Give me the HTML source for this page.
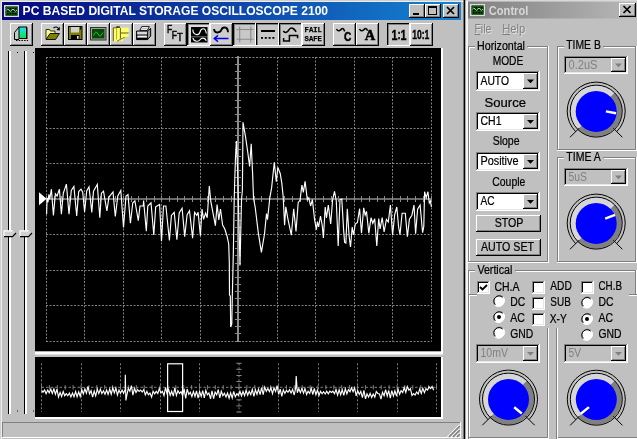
<!DOCTYPE html>
<html><head><meta charset="utf-8"><title>PC BASED DIGITAL STORAGE OSCILLOSCOPE 2100</title>
<style>html,body{margin:0;padding:0;background:#c0c0c0;overflow:hidden}svg{display:block;will-change:transform}text{white-space:pre}</style></head>
<body>
<svg width="637" height="439" viewBox="0 0 637 439" shape-rendering="auto">
<defs>
<linearGradient id="ga" x1="0" x2="1" y1="0" y2="0"><stop offset="0" stop-color="#06067e"/><stop offset="1" stop-color="#1484d2"/></linearGradient>
<linearGradient id="gi" x1="0" x2="1" y1="0" y2="0"><stop offset="0" stop-color="#808080"/><stop offset="1" stop-color="#b8b8b8"/></linearGradient>
<linearGradient id="gc" x1="0" x2="0" y1="0" y2="1"><stop offset="0" stop-color="#20e0ff"/><stop offset="1" stop-color="#10e040"/></linearGradient>
</defs>
<rect x="0" y="0" width="637" height="439" fill="#c0c0c0" />
<rect x="0" y="0" width="466" height="1" fill="#d0d0d0" />
<rect x="0" y="0" width="1" height="439" fill="#d0d0d0" />
<rect x="1" y="1" width="464" height="1" fill="#ececec" />
<rect x="1" y="1" width="1" height="439" fill="#ececec" />
<rect x="463.6" y="0" width="1.9" height="439" fill="#000" />
<rect x="2" y="2" width="459" height="18" fill="url(#ga)" />
<rect x="4" y="5" width="15" height="12" fill="#dcdcdc" />
<rect x="5.5" y="6.5" width="12" height="9" fill="#000" />
<rect x="6.0" y="6.5" width="1" height="9" fill="#095c09" />
<rect x="8.6" y="6.5" width="1" height="9" fill="#095c09" />
<rect x="11.2" y="6.5" width="1" height="9" fill="#095c09" />
<rect x="13.8" y="6.5" width="1" height="9" fill="#095c09" />
<rect x="16.4" y="6.5" width="1" height="9" fill="#095c09" />
<rect x="5.5" y="7.0" width="12" height="1" fill="#095c09" />
<rect x="5.5" y="9.5" width="12" height="1" fill="#095c09" />
<rect x="5.5" y="12.0" width="12" height="1" fill="#095c09" />
<rect x="5.5" y="14.5" width="12" height="1" fill="#095c09" />
<path d="M6.5,10.2 q1.3,-2.4 2.6,0 t2.6,0 t2.6,0 t2.6,0" fill="none" stroke="#e8ffe8" stroke-width="0.8"/>
<text x="22.6" y="15.2" font-family="'Liberation Sans', Arial, sans-serif" font-size="13" font-weight="bold" fill="#fff" text-anchor="start" textLength="305.5" lengthAdjust="spacingAndGlyphs" >PC BASED DIGITAL STORAGE OSCILLOSCOPE 2100</text>
<rect x="409" y="4" width="16" height="14" fill="#c0c0c0" />
<rect x="409" y="4" width="15" height="1" fill="#fff" />
<rect x="409" y="4" width="1" height="13" fill="#fff" />
<rect x="409" y="17" width="16" height="1" fill="#000" />
<rect x="424" y="4" width="1" height="14" fill="#000" />
<rect x="410" y="16" width="14" height="1" fill="#808080" />
<rect x="423" y="5" width="1" height="12" fill="#808080" />
<rect x="413" y="13" width="6" height="2" fill="#000" />
<rect x="425" y="4" width="16" height="14" fill="#c0c0c0" />
<rect x="425" y="4" width="15" height="1" fill="#fff" />
<rect x="425" y="4" width="1" height="13" fill="#fff" />
<rect x="425" y="17" width="16" height="1" fill="#000" />
<rect x="440" y="4" width="1" height="14" fill="#000" />
<rect x="426" y="16" width="14" height="1" fill="#808080" />
<rect x="439" y="5" width="1" height="12" fill="#808080" />
<rect x="428" y="6" width="9" height="9" fill="#000" />
<rect x="429" y="8" width="7" height="6" fill="#c0c0c0" />
<rect x="443" y="4" width="16" height="14" fill="#c0c0c0" />
<rect x="443" y="4" width="15" height="1" fill="#fff" />
<rect x="443" y="4" width="1" height="13" fill="#fff" />
<rect x="443" y="17" width="16" height="1" fill="#000" />
<rect x="458" y="4" width="1" height="14" fill="#000" />
<rect x="444" y="16" width="14" height="1" fill="#808080" />
<rect x="457" y="5" width="1" height="12" fill="#808080" />
<path d="M447,7 l7,7 M454,7 l-7,7" stroke="#000" stroke-width="1.7" fill="none"/>
<rect x="10" y="23" width="23" height="23" fill="#cdcdcd" />
<rect x="10" y="23" width="22" height="1" fill="#fff" />
<rect x="10" y="23" width="1" height="22" fill="#fff" />
<rect x="10" y="45" width="23" height="1" fill="#000" />
<rect x="32" y="23" width="1" height="23" fill="#000" />
<rect x="11" y="44" width="21" height="1" fill="#808080" />
<rect x="31" y="24" width="1" height="21" fill="#808080" />
<path d="M19,27 L14.5,32.5 L14.5,39.5 L19,39.5" fill="#c8c8c8" stroke="#000" stroke-width="1"/>
<rect x="26" y="27.5" width="1.5" height="11.5" fill="#000" />
<rect x="19" y="27" width="7.5" height="11.5" fill="url(#gc)" stroke="#000" stroke-width="1"/>
<line x1="16" y1="40.5" x2="28" y2="40.5" stroke="#000" stroke-width="1" stroke-dasharray="1.5 1.2"/>
<rect x="41" y="23" width="23" height="23" fill="#cdcdcd" />
<rect x="41" y="23" width="22" height="1" fill="#fff" />
<rect x="41" y="23" width="1" height="22" fill="#fff" />
<rect x="41" y="45" width="23" height="1" fill="#000" />
<rect x="63" y="23" width="1" height="23" fill="#000" />
<rect x="42" y="44" width="21" height="1" fill="#808080" />
<rect x="62" y="24" width="1" height="21" fill="#808080" />
<path d="M46,39 L46,29.5 L49.5,29.5 L50.5,31 L55,31 L55,33.5" fill="#ffff80" stroke="#000" stroke-width="0.8"/>
<path d="M46,39.5 L50,33.5 L59.5,33.5 L55.5,39.5 Z" fill="#808000" stroke="#000" stroke-width="0.9"/>
<path d="M53.5,28 q3,-2.5 5.5,1" fill="none" stroke="#000" stroke-width="1.1"/>
<path d="M59.8,26.8 L59.8,30.5 L56.4,30 Z" fill="#000"/>
<rect x="64" y="23" width="23" height="23" fill="#cdcdcd" />
<rect x="64" y="23" width="22" height="1" fill="#fff" />
<rect x="64" y="23" width="1" height="22" fill="#fff" />
<rect x="64" y="45" width="23" height="1" fill="#000" />
<rect x="86" y="23" width="1" height="23" fill="#000" />
<rect x="65" y="44" width="21" height="1" fill="#808080" />
<rect x="85" y="24" width="1" height="21" fill="#808080" />
<rect x="68.5" y="26.5" width="13.5" height="13" fill="#808000" stroke="#000" stroke-width="1"/>
<rect x="71" y="27" width="8" height="5.5" fill="#d0d0d0" />
<rect x="71" y="35" width="8.5" height="4.5" fill="#000" />
<rect x="77" y="36" width="1.6" height="2.8" fill="#e0e0e0" />
<rect x="80" y="27.3" width="1.2" height="2.2" fill="#000" />
<rect x="87" y="23" width="23" height="23" fill="#cdcdcd" />
<rect x="87" y="23" width="22" height="1" fill="#fff" />
<rect x="87" y="23" width="1" height="22" fill="#fff" />
<rect x="87" y="45" width="23" height="1" fill="#000" />
<rect x="109" y="23" width="1" height="23" fill="#000" />
<rect x="88" y="44" width="21" height="1" fill="#808080" />
<rect x="108" y="24" width="1" height="21" fill="#808080" />
<rect x="90.5" y="27.5" width="15.5" height="12.5" fill="#a0a0a0" stroke="#303030" stroke-width="1"/>
<rect x="92" y="29" width="12.5" height="9.5" fill="#064806" />
<path d="M93.5,35.5 q2.2,-6 4.5,-1.5 t4.8,-1.5" fill="none" stroke="#30c030" stroke-width="1"/>
<rect x="110" y="23" width="23" height="23" fill="#cdcdcd" />
<rect x="110" y="23" width="22" height="1" fill="#fff" />
<rect x="110" y="23" width="1" height="22" fill="#fff" />
<rect x="110" y="45" width="23" height="1" fill="#000" />
<rect x="132" y="23" width="1" height="23" fill="#000" />
<rect x="111" y="44" width="21" height="1" fill="#808080" />
<rect x="131" y="24" width="1" height="21" fill="#808080" />
<path d="M113.3,27.8 L128.8,27.8 L128.8,36.6 L126,36.6 L122.3,41.2 L113.3,41.2 Z" fill="#ffff70"/>
<path d="M113.3,41 L113.3,27.8 L116,27.8 M120.4,28 L120.4,38.8 M120.8,33 L128.6,33" stroke="#606000" stroke-width="1" fill="none"/>
<path d="M116.6,28 L116.6,39.5" stroke="#b0b030" stroke-width="1" fill="none"/>
<rect x="116.2" y="26.2" width="3.6" height="1.8" fill="#404000" />
<line x1="117.5" y1="41" x2="124.8" y2="37.2" stroke="#303000" stroke-width="1.1" stroke-dasharray="1.2 1"/>
<rect x="133" y="23" width="23" height="23" fill="#cdcdcd" />
<rect x="133" y="23" width="22" height="1" fill="#fff" />
<rect x="133" y="23" width="1" height="22" fill="#fff" />
<rect x="133" y="45" width="23" height="1" fill="#000" />
<rect x="155" y="23" width="1" height="23" fill="#000" />
<rect x="134" y="44" width="21" height="1" fill="#808080" />
<rect x="154" y="24" width="1" height="21" fill="#808080" />
<path d="M139.8,30.4 L141.8,26.6 L149.3,26.6 L147.3,30.4 Z" fill="#fff" stroke="#000" stroke-width="0.9"/>
<line x1="142" y1="28.5" x2="147.5" y2="28.5" stroke="#a0a0a0" stroke-width="0.7" />
<path d="M136.6,31 L147.5,31 L150.6,28.6 L150.6,36.2 L147.5,39.6 L136.6,39.6 Z" fill="#b8b8b8" stroke="#000" stroke-width="1"/>
<path d="M147.5,31 L150.6,28.6 L150.6,36.2 L147.5,39.6 Z" fill="#989898" stroke="#000" stroke-width="0.8"/>
<rect x="136.6" y="34.6" width="11" height="1" fill="#000" />
<rect x="138" y="35.8" width="8.6" height="1.2" fill="#f4f4f4" />
<rect x="136.6" y="37.8" width="11" height="1.8" fill="#000" />
<rect x="137.4" y="32.2" width="9.5" height="1.6" fill="#e0e0e0" />
<rect x="164" y="23" width="23" height="23" fill="#cdcdcd" />
<rect x="164" y="23" width="22" height="1" fill="#fff" />
<rect x="164" y="23" width="1" height="22" fill="#fff" />
<rect x="164" y="45" width="23" height="1" fill="#000" />
<rect x="186" y="23" width="1" height="23" fill="#000" />
<rect x="165" y="44" width="21" height="1" fill="#808080" />
<rect x="185" y="24" width="1" height="21" fill="#808080" />
<text font-family="'Liberation Sans', Arial, sans-serif" font-size="10.5" fill="#000" stroke="#000" stroke-width="0.45"><tspan x="166.9" y="33.3" textLength="5.2" lengthAdjust="spacingAndGlyphs">F</tspan><tspan x="171.7" y="38.5" textLength="5.2" lengthAdjust="spacingAndGlyphs">F</tspan><tspan x="176.9" y="41.3" font-size="10" textLength="5.8" lengthAdjust="spacingAndGlyphs">T</tspan></text>
<rect x="187" y="23" width="23" height="23" fill="#dcdcdc" />
<rect x="187" y="23" width="23" height="1" fill="#000" />
<rect x="187" y="23" width="1" height="23" fill="#000" />
<rect x="188" y="24" width="21" height="1" fill="#808080" />
<rect x="188" y="24" width="1" height="21" fill="#808080" />
<rect x="187" y="45" width="23" height="1" fill="#fff" />
<rect x="209" y="23" width="1" height="23" fill="#fff" />
<rect x="191" y="27" width="16.5" height="15.5" fill="#000" />
<line x1="191" y1="36.8" x2="207.5" y2="36.8" stroke="#909090" stroke-width="0.8" />
<path d="M192.8,29.5 C193,35.5 199,36 200,32 C201,28 205.5,27 206.3,33.5" fill="none" stroke="#fff" stroke-width="1.1"/>
<path d="M192.8,38 C194,42 198.5,42 200,39.8 C201.5,37.6 205,37.2 206.3,40.8" fill="none" stroke="#fff" stroke-width="1.1"/>
<rect x="210" y="23" width="23" height="23" fill="#cdcdcd" />
<rect x="210" y="23" width="22" height="1" fill="#fff" />
<rect x="210" y="23" width="1" height="22" fill="#fff" />
<rect x="210" y="45" width="23" height="1" fill="#000" />
<rect x="232" y="23" width="1" height="23" fill="#000" />
<rect x="211" y="44" width="21" height="1" fill="#808080" />
<rect x="231" y="24" width="1" height="21" fill="#808080" />
<path d="M214,29 q0.5,3.8 3.5,3.5 q3,-0.3 3.8,-2.5 q1,-2.8 3.5,-2.5 q3,0.3 3.2,4.8" fill="none" stroke="#000" stroke-width="1.9"/>
<path d="M228.5,38.5 L214.5,38.5 M218,35.4 L214.2,38.5 L218,41.6" fill="none" stroke="#0000e0" stroke-width="1.4"/>
<rect x="233" y="23" width="23" height="23" fill="#c8c8c8" />
<rect x="233" y="23" width="23" height="1" fill="#000" />
<rect x="233" y="23" width="1" height="23" fill="#000" />
<rect x="234" y="24" width="21" height="1" fill="#808080" />
<rect x="234" y="24" width="1" height="21" fill="#808080" />
<rect x="233" y="45" width="23" height="1" fill="#fff" />
<rect x="255" y="23" width="1" height="23" fill="#fff" />
<path d="M239.7,26.5 V42.5 M250.8,26.5 V42.5 M236.5,29.5 H253.5 M236.5,39.3 H253.5" stroke="#8a8a8a" stroke-width="1.1" fill="none"/>
<rect x="256" y="23" width="23" height="23" fill="#c8c8c8" />
<rect x="256" y="23" width="23" height="1" fill="#000" />
<rect x="256" y="23" width="1" height="23" fill="#000" />
<rect x="257" y="24" width="21" height="1" fill="#808080" />
<rect x="257" y="24" width="1" height="21" fill="#808080" />
<rect x="256" y="45" width="23" height="1" fill="#fff" />
<rect x="278" y="23" width="1" height="23" fill="#fff" />
<rect x="261" y="30" width="14" height="2" fill="#000" />
<rect x="261.0" y="37" width="2" height="1.8" fill="#000" />
<rect x="264.8" y="37" width="2" height="1.8" fill="#000" />
<rect x="268.6" y="37" width="2" height="1.8" fill="#000" />
<rect x="272.4" y="37" width="2" height="1.8" fill="#000" />
<rect x="279" y="23" width="23" height="23" fill="#c8c8c8" />
<rect x="279" y="23" width="23" height="1" fill="#000" />
<rect x="279" y="23" width="1" height="23" fill="#000" />
<rect x="280" y="24" width="21" height="1" fill="#808080" />
<rect x="280" y="24" width="1" height="21" fill="#808080" />
<rect x="279" y="45" width="23" height="1" fill="#fff" />
<rect x="301" y="23" width="1" height="23" fill="#fff" />
<path d="M283.3,31 q1.2,1.9 3,1.3 q1.6,-0.6 2.8,-2.7 q1.6,-2.1 3.5,-1.3 q1.7,0.8 3.6,3.4" fill="none" stroke="#000" stroke-width="1.5"/>
<path d="M283.6,38 V41 H289.4 V35.4 H297.6 V38.2" fill="none" stroke="#000" stroke-width="1.5"/>
<rect x="302" y="23" width="23" height="23" fill="#cdcdcd" />
<rect x="302" y="23" width="22" height="1" fill="#fff" />
<rect x="302" y="23" width="1" height="22" fill="#fff" />
<rect x="302" y="45" width="23" height="1" fill="#000" />
<rect x="324" y="23" width="1" height="23" fill="#000" />
<rect x="303" y="44" width="21" height="1" fill="#808080" />
<rect x="323" y="24" width="1" height="21" fill="#808080" />
<text x="304.6" y="32.3" font-family="'Liberation Mono', monospace" font-size="7.6" font-weight="bold" fill="#000" text-anchor="start" textLength="17.2" lengthAdjust="spacingAndGlyphs" stroke="#000" stroke-width="0.25">FAIL</text>
<text x="304.6" y="41" font-family="'Liberation Mono', monospace" font-size="7.6" font-weight="bold" fill="#000" text-anchor="start" textLength="17.2" lengthAdjust="spacingAndGlyphs" stroke="#000" stroke-width="0.25">SAFE</text>
<rect x="333" y="23" width="23" height="23" fill="#cdcdcd" />
<rect x="333" y="23" width="22" height="1" fill="#fff" />
<rect x="333" y="23" width="1" height="22" fill="#fff" />
<rect x="333" y="45" width="23" height="1" fill="#000" />
<rect x="355" y="23" width="1" height="23" fill="#000" />
<rect x="334" y="44" width="21" height="1" fill="#808080" />
<rect x="354" y="24" width="1" height="21" fill="#808080" />
<path d="M336.5,29 q1.2,2.4 3,1.6 q1.4,-0.6 2,-1.6 q1,-1.2 2,0 l1.2,2.4" fill="none" stroke="#000" stroke-width="1.5"/>
<text x="344" y="40.9" font-family="'Liberation Sans', Arial, sans-serif" font-size="12.3" font-weight="bold" fill="#000" text-anchor="start" textLength="7.3" lengthAdjust="spacingAndGlyphs" stroke="#000" stroke-width="0.5">C</text>
<rect x="356" y="23" width="23" height="23" fill="#cdcdcd" />
<rect x="356" y="23" width="22" height="1" fill="#fff" />
<rect x="356" y="23" width="1" height="22" fill="#fff" />
<rect x="356" y="45" width="23" height="1" fill="#000" />
<rect x="378" y="23" width="1" height="23" fill="#000" />
<rect x="357" y="44" width="21" height="1" fill="#808080" />
<rect x="377" y="24" width="1" height="21" fill="#808080" />
<path d="M359.5,29 q1.2,2.4 3,1.6 q1.4,-0.6 2,-1.6 q1,-1.2 2,0 l1.2,1.6" fill="none" stroke="#000" stroke-width="1.5"/>
<text x="364.8" y="40.4" font-family="'Liberation Serif', serif" font-size="13.8" font-weight="bold" fill="#000" text-anchor="start" textLength="10.5" lengthAdjust="spacingAndGlyphs" stroke="#000" stroke-width="0.5">A</text>
<rect x="387" y="23" width="23" height="23" fill="#c8c8c8" />
<rect x="387" y="23" width="23" height="1" fill="#000" />
<rect x="387" y="23" width="1" height="23" fill="#000" />
<rect x="388" y="24" width="21" height="1" fill="#808080" />
<rect x="388" y="24" width="1" height="21" fill="#808080" />
<rect x="387" y="45" width="23" height="1" fill="#fff" />
<rect x="409" y="23" width="1" height="23" fill="#fff" />
<text font-family="'Liberation Sans', Arial, sans-serif" font-size="14" font-weight="bold" fill="#000" stroke="#000" stroke-width="0.4"><tspan x="391.4" y="39.9" textLength="6" lengthAdjust="spacingAndGlyphs">1</tspan><tspan x="397.6" y="39.3" font-size="13" textLength="3.2" lengthAdjust="spacingAndGlyphs">:</tspan><tspan x="400.6" y="39.9" textLength="6" lengthAdjust="spacingAndGlyphs">1</tspan></text>
<rect x="410" y="23" width="23" height="23" fill="#cdcdcd" />
<rect x="410" y="23" width="22" height="1" fill="#fff" />
<rect x="410" y="23" width="1" height="22" fill="#fff" />
<rect x="410" y="45" width="23" height="1" fill="#000" />
<rect x="432" y="23" width="1" height="23" fill="#000" />
<rect x="411" y="44" width="21" height="1" fill="#808080" />
<rect x="431" y="24" width="1" height="21" fill="#808080" />
<text x="412.2" y="38.5" font-family="'Liberation Sans', Arial, sans-serif" font-size="13.4" font-weight="bold" fill="#000" text-anchor="start" textLength="17.2" lengthAdjust="spacingAndGlyphs" stroke="#000" stroke-width="0.4">10:1</text>
<rect x="8" y="51" width="1" height="363" fill="#000" />
<rect x="9" y="51" width="2" height="363" fill="#fff" />
<path d="M4,230.5 H12.5 L16,233 L12.5,237 H4 Z" fill="#d0d0d0"/>
<path d="M4,236.5 V230.8 H12.5" fill="none" stroke="#fff" stroke-width="1.2"/>
<path d="M4,236.7 H12.5 L16,233" fill="none" stroke="#000" stroke-width="1.2"/>
<rect x="24" y="51" width="1" height="363" fill="#000" />
<rect x="25" y="51" width="2" height="363" fill="#fff" />
<path d="M20,230.5 H28.5 L32,233 L28.5,237 H20 Z" fill="#d0d0d0"/>
<path d="M20,236.5 V230.8 H28.5" fill="none" stroke="#fff" stroke-width="1.2"/>
<path d="M20,236.7 H28.5 L32,233" fill="none" stroke="#000" stroke-width="1.2"/>
<rect x="17" y="52" width="1" height="1" fill="#000" />
<rect x="17" y="410.5" width="1" height="1" fill="#000" />
<rect x="33" y="52" width="1" height="1" fill="#000" />
<rect x="33" y="410.5" width="1" height="1" fill="#000" />
<rect x="35" y="48" width="406" height="303.5" fill="#000" />
<rect x="35" y="351.5" width="408" height="3" fill="#fff" />
<rect x="441" y="48" width="2" height="306" fill="#fff" />
<line x1="46.5" y1="57.0" x2="46.5" y2="341.5" stroke="#808080" stroke-width="1" stroke-dasharray="2 1.5"/>
<line x1="84.5" y1="57.0" x2="84.5" y2="341.5" stroke="#808080" stroke-width="1" stroke-dasharray="2 1.5"/>
<line x1="123.5" y1="57.0" x2="123.5" y2="341.5" stroke="#808080" stroke-width="1" stroke-dasharray="2 1.5"/>
<line x1="161.5" y1="57.0" x2="161.5" y2="341.5" stroke="#808080" stroke-width="1" stroke-dasharray="2 1.5"/>
<line x1="200.5" y1="57.0" x2="200.5" y2="341.5" stroke="#808080" stroke-width="1" stroke-dasharray="2 1.5"/>
<line x1="277.5" y1="57.0" x2="277.5" y2="341.5" stroke="#808080" stroke-width="1" stroke-dasharray="2 1.5"/>
<line x1="315.5" y1="57.0" x2="315.5" y2="341.5" stroke="#808080" stroke-width="1" stroke-dasharray="2 1.5"/>
<line x1="354.5" y1="57.0" x2="354.5" y2="341.5" stroke="#808080" stroke-width="1" stroke-dasharray="2 1.5"/>
<line x1="392.5" y1="57.0" x2="392.5" y2="341.5" stroke="#808080" stroke-width="1" stroke-dasharray="2 1.5"/>
<line x1="431.5" y1="57.0" x2="431.5" y2="341.5" stroke="#808080" stroke-width="1" stroke-dasharray="2 1.5"/>
<line x1="46.0" y1="57.5" x2="431.5" y2="57.5" stroke="#808080" stroke-width="1" stroke-dasharray="2 1.5"/>
<line x1="46.0" y1="92.5" x2="431.5" y2="92.5" stroke="#808080" stroke-width="1" stroke-dasharray="2 1.5"/>
<line x1="46.0" y1="128.5" x2="431.5" y2="128.5" stroke="#808080" stroke-width="1" stroke-dasharray="2 1.5"/>
<line x1="46.0" y1="163.5" x2="431.5" y2="163.5" stroke="#808080" stroke-width="1" stroke-dasharray="2 1.5"/>
<line x1="46.0" y1="234.5" x2="431.5" y2="234.5" stroke="#808080" stroke-width="1" stroke-dasharray="2 1.5"/>
<line x1="46.0" y1="270.5" x2="431.5" y2="270.5" stroke="#808080" stroke-width="1" stroke-dasharray="2 1.5"/>
<line x1="46.0" y1="305.5" x2="431.5" y2="305.5" stroke="#808080" stroke-width="1" stroke-dasharray="2 1.5"/>
<line x1="46.0" y1="341.5" x2="431.5" y2="341.5" stroke="#808080" stroke-width="1" stroke-dasharray="2 1.5"/>
<line x1="238" y1="56.0" x2="238" y2="341.5" stroke="#8c8c8c" stroke-width="2" />
<line x1="46.5" y1="199" x2="431" y2="199" stroke="#8c8c8c" stroke-width="1.7" />
<line x1="235" y1="57.5" x2="241" y2="57.5" stroke="#8c8c8c" stroke-width="1" />
<line x1="235" y1="64.5" x2="241" y2="64.5" stroke="#8c8c8c" stroke-width="1" />
<line x1="235" y1="71.5" x2="241" y2="71.5" stroke="#8c8c8c" stroke-width="1" />
<line x1="235" y1="78.5" x2="241" y2="78.5" stroke="#8c8c8c" stroke-width="1" />
<line x1="235" y1="85.5" x2="241" y2="85.5" stroke="#8c8c8c" stroke-width="1" />
<line x1="235" y1="92.5" x2="241" y2="92.5" stroke="#8c8c8c" stroke-width="1" />
<line x1="235" y1="100.5" x2="241" y2="100.5" stroke="#8c8c8c" stroke-width="1" />
<line x1="235" y1="107.5" x2="241" y2="107.5" stroke="#8c8c8c" stroke-width="1" />
<line x1="235" y1="114.5" x2="241" y2="114.5" stroke="#8c8c8c" stroke-width="1" />
<line x1="235" y1="121.5" x2="241" y2="121.5" stroke="#8c8c8c" stroke-width="1" />
<line x1="235" y1="128.5" x2="241" y2="128.5" stroke="#8c8c8c" stroke-width="1" />
<line x1="235" y1="135.5" x2="241" y2="135.5" stroke="#8c8c8c" stroke-width="1" />
<line x1="235" y1="142.5" x2="241" y2="142.5" stroke="#8c8c8c" stroke-width="1" />
<line x1="235" y1="149.5" x2="241" y2="149.5" stroke="#8c8c8c" stroke-width="1" />
<line x1="235" y1="156.5" x2="241" y2="156.5" stroke="#8c8c8c" stroke-width="1" />
<line x1="235" y1="163.5" x2="241" y2="163.5" stroke="#8c8c8c" stroke-width="1" />
<line x1="235" y1="170.5" x2="241" y2="170.5" stroke="#8c8c8c" stroke-width="1" />
<line x1="235" y1="177.5" x2="241" y2="177.5" stroke="#8c8c8c" stroke-width="1" />
<line x1="235" y1="185.5" x2="241" y2="185.5" stroke="#8c8c8c" stroke-width="1" />
<line x1="235" y1="192.5" x2="241" y2="192.5" stroke="#8c8c8c" stroke-width="1" />
<line x1="235" y1="199.5" x2="241" y2="199.5" stroke="#8c8c8c" stroke-width="1" />
<line x1="235" y1="206.5" x2="241" y2="206.5" stroke="#8c8c8c" stroke-width="1" />
<line x1="235" y1="213.5" x2="241" y2="213.5" stroke="#8c8c8c" stroke-width="1" />
<line x1="235" y1="220.5" x2="241" y2="220.5" stroke="#8c8c8c" stroke-width="1" />
<line x1="235" y1="227.5" x2="241" y2="227.5" stroke="#8c8c8c" stroke-width="1" />
<line x1="235" y1="234.5" x2="241" y2="234.5" stroke="#8c8c8c" stroke-width="1" />
<line x1="235" y1="241.5" x2="241" y2="241.5" stroke="#8c8c8c" stroke-width="1" />
<line x1="235" y1="248.5" x2="241" y2="248.5" stroke="#8c8c8c" stroke-width="1" />
<line x1="235" y1="255.5" x2="241" y2="255.5" stroke="#8c8c8c" stroke-width="1" />
<line x1="235" y1="263.5" x2="241" y2="263.5" stroke="#8c8c8c" stroke-width="1" />
<line x1="235" y1="270.5" x2="241" y2="270.5" stroke="#8c8c8c" stroke-width="1" />
<line x1="235" y1="277.5" x2="241" y2="277.5" stroke="#8c8c8c" stroke-width="1" />
<line x1="235" y1="284.5" x2="241" y2="284.5" stroke="#8c8c8c" stroke-width="1" />
<line x1="235" y1="291.5" x2="241" y2="291.5" stroke="#8c8c8c" stroke-width="1" />
<line x1="235" y1="298.5" x2="241" y2="298.5" stroke="#8c8c8c" stroke-width="1" />
<line x1="235" y1="305.5" x2="241" y2="305.5" stroke="#8c8c8c" stroke-width="1" />
<line x1="235" y1="312.5" x2="241" y2="312.5" stroke="#8c8c8c" stroke-width="1" />
<line x1="235" y1="319.5" x2="241" y2="319.5" stroke="#8c8c8c" stroke-width="1" />
<line x1="235" y1="326.5" x2="241" y2="326.5" stroke="#8c8c8c" stroke-width="1" />
<line x1="235" y1="333.5" x2="241" y2="333.5" stroke="#8c8c8c" stroke-width="1" />
<line x1="235" y1="341.5" x2="241" y2="341.5" stroke="#8c8c8c" stroke-width="1" />
<line x1="46.5" y1="196" x2="46.5" y2="202" stroke="#8c8c8c" stroke-width="1" />
<line x1="54.5" y1="196" x2="54.5" y2="202" stroke="#8c8c8c" stroke-width="1" />
<line x1="61.5" y1="196" x2="61.5" y2="202" stroke="#8c8c8c" stroke-width="1" />
<line x1="69.5" y1="196" x2="69.5" y2="202" stroke="#8c8c8c" stroke-width="1" />
<line x1="77.5" y1="196" x2="77.5" y2="202" stroke="#8c8c8c" stroke-width="1" />
<line x1="84.5" y1="196" x2="84.5" y2="202" stroke="#8c8c8c" stroke-width="1" />
<line x1="92.5" y1="196" x2="92.5" y2="202" stroke="#8c8c8c" stroke-width="1" />
<line x1="100.5" y1="196" x2="100.5" y2="202" stroke="#8c8c8c" stroke-width="1" />
<line x1="108.5" y1="196" x2="108.5" y2="202" stroke="#8c8c8c" stroke-width="1" />
<line x1="115.5" y1="196" x2="115.5" y2="202" stroke="#8c8c8c" stroke-width="1" />
<line x1="123.5" y1="196" x2="123.5" y2="202" stroke="#8c8c8c" stroke-width="1" />
<line x1="131.5" y1="196" x2="131.5" y2="202" stroke="#8c8c8c" stroke-width="1" />
<line x1="138.5" y1="196" x2="138.5" y2="202" stroke="#8c8c8c" stroke-width="1" />
<line x1="146.5" y1="196" x2="146.5" y2="202" stroke="#8c8c8c" stroke-width="1" />
<line x1="154.5" y1="196" x2="154.5" y2="202" stroke="#8c8c8c" stroke-width="1" />
<line x1="161.5" y1="196" x2="161.5" y2="202" stroke="#8c8c8c" stroke-width="1" />
<line x1="169.5" y1="196" x2="169.5" y2="202" stroke="#8c8c8c" stroke-width="1" />
<line x1="177.5" y1="196" x2="177.5" y2="202" stroke="#8c8c8c" stroke-width="1" />
<line x1="184.5" y1="196" x2="184.5" y2="202" stroke="#8c8c8c" stroke-width="1" />
<line x1="192.5" y1="196" x2="192.5" y2="202" stroke="#8c8c8c" stroke-width="1" />
<line x1="200.5" y1="196" x2="200.5" y2="202" stroke="#8c8c8c" stroke-width="1" />
<line x1="207.5" y1="196" x2="207.5" y2="202" stroke="#8c8c8c" stroke-width="1" />
<line x1="215.5" y1="196" x2="215.5" y2="202" stroke="#8c8c8c" stroke-width="1" />
<line x1="223.5" y1="196" x2="223.5" y2="202" stroke="#8c8c8c" stroke-width="1" />
<line x1="231.5" y1="196" x2="231.5" y2="202" stroke="#8c8c8c" stroke-width="1" />
<line x1="238.5" y1="196" x2="238.5" y2="202" stroke="#8c8c8c" stroke-width="1" />
<line x1="246.5" y1="196" x2="246.5" y2="202" stroke="#8c8c8c" stroke-width="1" />
<line x1="254.5" y1="196" x2="254.5" y2="202" stroke="#8c8c8c" stroke-width="1" />
<line x1="261.5" y1="196" x2="261.5" y2="202" stroke="#8c8c8c" stroke-width="1" />
<line x1="269.5" y1="196" x2="269.5" y2="202" stroke="#8c8c8c" stroke-width="1" />
<line x1="277.5" y1="196" x2="277.5" y2="202" stroke="#8c8c8c" stroke-width="1" />
<line x1="284.5" y1="196" x2="284.5" y2="202" stroke="#8c8c8c" stroke-width="1" />
<line x1="292.5" y1="196" x2="292.5" y2="202" stroke="#8c8c8c" stroke-width="1" />
<line x1="300.5" y1="196" x2="300.5" y2="202" stroke="#8c8c8c" stroke-width="1" />
<line x1="307.5" y1="196" x2="307.5" y2="202" stroke="#8c8c8c" stroke-width="1" />
<line x1="315.5" y1="196" x2="315.5" y2="202" stroke="#8c8c8c" stroke-width="1" />
<line x1="323.5" y1="196" x2="323.5" y2="202" stroke="#8c8c8c" stroke-width="1" />
<line x1="331.5" y1="196" x2="331.5" y2="202" stroke="#8c8c8c" stroke-width="1" />
<line x1="338.5" y1="196" x2="338.5" y2="202" stroke="#8c8c8c" stroke-width="1" />
<line x1="346.5" y1="196" x2="346.5" y2="202" stroke="#8c8c8c" stroke-width="1" />
<line x1="354.5" y1="196" x2="354.5" y2="202" stroke="#8c8c8c" stroke-width="1" />
<line x1="361.5" y1="196" x2="361.5" y2="202" stroke="#8c8c8c" stroke-width="1" />
<line x1="369.5" y1="196" x2="369.5" y2="202" stroke="#8c8c8c" stroke-width="1" />
<line x1="377.5" y1="196" x2="377.5" y2="202" stroke="#8c8c8c" stroke-width="1" />
<line x1="384.5" y1="196" x2="384.5" y2="202" stroke="#8c8c8c" stroke-width="1" />
<line x1="392.5" y1="196" x2="392.5" y2="202" stroke="#8c8c8c" stroke-width="1" />
<line x1="400.5" y1="196" x2="400.5" y2="202" stroke="#8c8c8c" stroke-width="1" />
<line x1="407.5" y1="196" x2="407.5" y2="202" stroke="#8c8c8c" stroke-width="1" />
<line x1="415.5" y1="196" x2="415.5" y2="202" stroke="#8c8c8c" stroke-width="1" />
<line x1="423.5" y1="196" x2="423.5" y2="202" stroke="#8c8c8c" stroke-width="1" />
<line x1="431.5" y1="196" x2="431.5" y2="202" stroke="#8c8c8c" stroke-width="1" />
<path d="M39,192.3 L46.6,198.7 L39,205.2 Z" fill="#fff"/>
<polyline fill="none" stroke="#fff" stroke-width="1.15" stroke-linejoin="miter" points="46.6,214.3 47.1,197.8 48,202.3 48.9,194.4 49.7,199.5 51.4,189.2 53.4,215.4 55.4,193.8 57.1,196 58.2,192.7 59.4,189.2 61.4,214.3 63.3,193.2 66.4,184.1 69,214.3 71.3,190.4 73.9,186.4 76.7,216 78.7,191.5 81,189.2 82.7,192.1 84.6,212 86.7,191 89,186.8 91.8,212.4 93.5,191.2 97.3,184.4 99.8,217.8 101.4,193.2 103.5,191.2 106.9,211 108.9,197.3 110.3,195.3 113,191.9 115.3,216.5 117.8,196 120.8,190.5 123.5,227.4 126,196 128,194.6 130.4,223.3 132.8,202.8 134.9,200.8 138.3,220.6 140,206 143.3,205.7 143.6,200.5 146.3,231.1 147.8,206 151,202.8 153.8,235 155.7,206.8 159.6,204.4 161.5,241.3 163.5,206 165.9,206 169.4,240.5 171.4,215.4 174.2,212.3 176.9,239.7 179.2,213 182.1,208.3 184.7,236.6 187.1,214.6 189.5,210.7 192.6,238.2 194.6,212.3 196.8,215.4 198.1,212.3 200.4,235.8 202,209.1 203.6,219.3 205.6,213 207.2,217.8 209.3,186 210.8,201.3 215.4,225.7 217.1,204.5 218.8,220 220.5,209 222.6,225 224.8,229 227,236 228.7,244 229.3,262 229.5,295 230.3,296 230.7,327 231.8,324 232.3,297 233.4,250 234.2,200 234.7,181.8 235.5,157 236.4,141 237.6,170 240,265.5 241.5,200 242.4,190 243,122.3 245.5,136.6 247.6,151 249.6,166.4 251.2,143.8 252.7,175.6 253.5,198 255.2,207.3 258.3,232.9 261.4,252.4 264.5,234 266.5,213.5 267.5,219.6 268.6,209.4 269.8,198 271.6,187.9 274.3,162.3 276.3,181.8 277.8,167.4 280.2,173.5 281.8,183.2 283.2,197 284.6,225.1 285.8,206.9 287.7,217.8 291.3,235.2 293.7,208.7 296,231.5 298.2,202.4 300,200.5 301.9,185 303.3,192.3 305.1,181.4 307.3,199.6 308.8,197.8 310.6,206 312.4,199.6 314.6,219.7 316.4,229.7 317.4,221.5 318.6,227 320.5,216 322.3,226 323.4,237.9 325.2,207 326.5,218 328.3,205 330.7,224 332.6,200 334.5,191.4 336.3,201 338.2,246 340,199.6 341.8,199 343.6,229.7 344.6,242.4 345.9,243 347.3,208.7 349.1,236 350.5,247 352.2,227 353.5,235 355.3,224 357.4,222.5 359.6,208.7 361.5,233.3 363.7,207.8 365.2,215.1 366.5,211.4 368.8,233.3 371,217.8 372.8,223.3 374.7,218.7 376.8,246 378.7,218.5 380.1,229 382.2,217.5 384.1,232 386.4,219.5 388.3,222 390.4,205 392.6,235 394.7,214.5 396.8,207 398.6,227 400,234.7 402.1,213.2 405.3,213.2 407.4,236.8 409.4,219.3 411.9,215.2 414,205 415.6,233.7 417.6,209.1 420.1,205 422.6,232.7 423.8,226.5 424.6,191.7 426.2,197.8 427.9,191.7 429.3,202.9 430.4,200.9 431.4,207"/>
<rect x="35" y="357" width="406" height="60" fill="#000" />
<rect x="35" y="417" width="408" height="2" fill="#fff" />
<rect x="441" y="357" width="2" height="61" fill="#fff" />
<line x1="41.5" y1="363.3" x2="41.5" y2="412" stroke="#7c7c7c" stroke-width="1" stroke-dasharray="2 2"/>
<line x1="81.5" y1="363.3" x2="81.5" y2="412" stroke="#7c7c7c" stroke-width="1" stroke-dasharray="2 2"/>
<line x1="120.5" y1="363.3" x2="120.5" y2="412" stroke="#7c7c7c" stroke-width="1" stroke-dasharray="2 2"/>
<line x1="160.5" y1="363.3" x2="160.5" y2="412" stroke="#7c7c7c" stroke-width="1" stroke-dasharray="2 2"/>
<line x1="199.5" y1="363.3" x2="199.5" y2="412" stroke="#7c7c7c" stroke-width="1" stroke-dasharray="2 2"/>
<line x1="278.5" y1="363.3" x2="278.5" y2="412" stroke="#7c7c7c" stroke-width="1" stroke-dasharray="2 2"/>
<line x1="318.5" y1="363.3" x2="318.5" y2="412" stroke="#7c7c7c" stroke-width="1" stroke-dasharray="2 2"/>
<line x1="357.5" y1="363.3" x2="357.5" y2="412" stroke="#7c7c7c" stroke-width="1" stroke-dasharray="2 2"/>
<line x1="397.5" y1="363.3" x2="397.5" y2="412" stroke="#7c7c7c" stroke-width="1" stroke-dasharray="2 2"/>
<line x1="436.5" y1="363.3" x2="436.5" y2="412" stroke="#7c7c7c" stroke-width="1" stroke-dasharray="2 2"/>
<line x1="239.0" y1="363.3" x2="239.0" y2="412" stroke="#808080" stroke-width="1" stroke-dasharray="2 2"/>
<line x1="41.5" y1="387.3" x2="436.5" y2="387.3" stroke="#808080" stroke-width="1" stroke-dasharray="2.5 2"/>
<line x1="236.4" y1="363.3" x2="241.6" y2="363.3" stroke="#8a8a8a" stroke-width="1" />
<line x1="236.4" y1="369.39" x2="241.6" y2="369.39" stroke="#8a8a8a" stroke-width="1" />
<line x1="236.4" y1="375.48" x2="241.6" y2="375.48" stroke="#8a8a8a" stroke-width="1" />
<line x1="236.4" y1="381.56" x2="241.6" y2="381.56" stroke="#8a8a8a" stroke-width="1" />
<line x1="236.4" y1="387.65" x2="241.6" y2="387.65" stroke="#8a8a8a" stroke-width="1" />
<line x1="236.4" y1="393.74" x2="241.6" y2="393.74" stroke="#8a8a8a" stroke-width="1" />
<line x1="236.4" y1="399.82" x2="241.6" y2="399.82" stroke="#8a8a8a" stroke-width="1" />
<line x1="236.4" y1="405.91" x2="241.6" y2="405.91" stroke="#8a8a8a" stroke-width="1" />
<line x1="236.4" y1="412.0" x2="241.6" y2="412.0" stroke="#8a8a8a" stroke-width="1" />
<line x1="41.5" y1="385.1" x2="41.5" y2="389.5" stroke="#808080" stroke-width="1" />
<line x1="49.4" y1="385.1" x2="49.4" y2="389.5" stroke="#808080" stroke-width="1" />
<line x1="57.3" y1="385.1" x2="57.3" y2="389.5" stroke="#808080" stroke-width="1" />
<line x1="65.2" y1="385.1" x2="65.2" y2="389.5" stroke="#808080" stroke-width="1" />
<line x1="73.1" y1="385.1" x2="73.1" y2="389.5" stroke="#808080" stroke-width="1" />
<line x1="81.0" y1="385.1" x2="81.0" y2="389.5" stroke="#808080" stroke-width="1" />
<line x1="88.9" y1="385.1" x2="88.9" y2="389.5" stroke="#808080" stroke-width="1" />
<line x1="96.8" y1="385.1" x2="96.8" y2="389.5" stroke="#808080" stroke-width="1" />
<line x1="104.7" y1="385.1" x2="104.7" y2="389.5" stroke="#808080" stroke-width="1" />
<line x1="112.6" y1="385.1" x2="112.6" y2="389.5" stroke="#808080" stroke-width="1" />
<line x1="120.5" y1="385.1" x2="120.5" y2="389.5" stroke="#808080" stroke-width="1" />
<line x1="128.4" y1="385.1" x2="128.4" y2="389.5" stroke="#808080" stroke-width="1" />
<line x1="136.3" y1="385.1" x2="136.3" y2="389.5" stroke="#808080" stroke-width="1" />
<line x1="144.2" y1="385.1" x2="144.2" y2="389.5" stroke="#808080" stroke-width="1" />
<line x1="152.1" y1="385.1" x2="152.1" y2="389.5" stroke="#808080" stroke-width="1" />
<line x1="160.0" y1="385.1" x2="160.0" y2="389.5" stroke="#808080" stroke-width="1" />
<line x1="167.9" y1="385.1" x2="167.9" y2="389.5" stroke="#808080" stroke-width="1" />
<line x1="175.8" y1="385.1" x2="175.8" y2="389.5" stroke="#808080" stroke-width="1" />
<line x1="183.7" y1="385.1" x2="183.7" y2="389.5" stroke="#808080" stroke-width="1" />
<line x1="191.6" y1="385.1" x2="191.6" y2="389.5" stroke="#808080" stroke-width="1" />
<line x1="199.5" y1="385.1" x2="199.5" y2="389.5" stroke="#808080" stroke-width="1" />
<line x1="207.4" y1="385.1" x2="207.4" y2="389.5" stroke="#808080" stroke-width="1" />
<line x1="215.3" y1="385.1" x2="215.3" y2="389.5" stroke="#808080" stroke-width="1" />
<line x1="223.2" y1="385.1" x2="223.2" y2="389.5" stroke="#808080" stroke-width="1" />
<line x1="231.1" y1="385.1" x2="231.1" y2="389.5" stroke="#808080" stroke-width="1" />
<line x1="239.0" y1="385.1" x2="239.0" y2="389.5" stroke="#808080" stroke-width="1" />
<line x1="246.9" y1="385.1" x2="246.9" y2="389.5" stroke="#808080" stroke-width="1" />
<line x1="254.8" y1="385.1" x2="254.8" y2="389.5" stroke="#808080" stroke-width="1" />
<line x1="262.7" y1="385.1" x2="262.7" y2="389.5" stroke="#808080" stroke-width="1" />
<line x1="270.6" y1="385.1" x2="270.6" y2="389.5" stroke="#808080" stroke-width="1" />
<line x1="278.5" y1="385.1" x2="278.5" y2="389.5" stroke="#808080" stroke-width="1" />
<line x1="286.4" y1="385.1" x2="286.4" y2="389.5" stroke="#808080" stroke-width="1" />
<line x1="294.3" y1="385.1" x2="294.3" y2="389.5" stroke="#808080" stroke-width="1" />
<line x1="302.2" y1="385.1" x2="302.2" y2="389.5" stroke="#808080" stroke-width="1" />
<line x1="310.1" y1="385.1" x2="310.1" y2="389.5" stroke="#808080" stroke-width="1" />
<line x1="318.0" y1="385.1" x2="318.0" y2="389.5" stroke="#808080" stroke-width="1" />
<line x1="325.9" y1="385.1" x2="325.9" y2="389.5" stroke="#808080" stroke-width="1" />
<line x1="333.8" y1="385.1" x2="333.8" y2="389.5" stroke="#808080" stroke-width="1" />
<line x1="341.7" y1="385.1" x2="341.7" y2="389.5" stroke="#808080" stroke-width="1" />
<line x1="349.6" y1="385.1" x2="349.6" y2="389.5" stroke="#808080" stroke-width="1" />
<line x1="357.5" y1="385.1" x2="357.5" y2="389.5" stroke="#808080" stroke-width="1" />
<line x1="365.4" y1="385.1" x2="365.4" y2="389.5" stroke="#808080" stroke-width="1" />
<line x1="373.3" y1="385.1" x2="373.3" y2="389.5" stroke="#808080" stroke-width="1" />
<line x1="381.2" y1="385.1" x2="381.2" y2="389.5" stroke="#808080" stroke-width="1" />
<line x1="389.1" y1="385.1" x2="389.1" y2="389.5" stroke="#808080" stroke-width="1" />
<line x1="397.0" y1="385.1" x2="397.0" y2="389.5" stroke="#808080" stroke-width="1" />
<line x1="404.9" y1="385.1" x2="404.9" y2="389.5" stroke="#808080" stroke-width="1" />
<line x1="412.8" y1="385.1" x2="412.8" y2="389.5" stroke="#808080" stroke-width="1" />
<line x1="420.7" y1="385.1" x2="420.7" y2="389.5" stroke="#808080" stroke-width="1" />
<line x1="428.6" y1="385.1" x2="428.6" y2="389.5" stroke="#808080" stroke-width="1" />
<line x1="436.5" y1="385.1" x2="436.5" y2="389.5" stroke="#808080" stroke-width="1" />
<polyline fill="none" stroke="#fff" stroke-width="1.15" stroke-linejoin="miter" points="41.5,390.4 43.0,392.2 44.6,390.0 46.1,393.8 47.7,390.0 49.2,392.8 50.8,389.0 52.3,393.4 53.9,388.9 55.4,394.2 57.0,389.2 58.5,397.0 60.1,392.4 61.6,396.5 63.2,391.5 64.7,395.7 66.3,393.6 67.8,395.7 69.4,393.0 70.9,397.0 72.5,393.0 74.0,396.8 75.6,391.5 77.1,396.7 78.7,391.8 80.2,396.5 81.8,389.5 83.3,393.9 84.9,388.8 86.4,393.2 88.0,386.4 89.5,393.8 91.1,390.7 92.6,397.1 94.2,391.0 95.7,395.8 97.3,389.1 98.8,393.6 100.4,389.3 101.9,393.6 103.5,390.7 105.0,394.3 106.6,390.0 108.1,394.3 109.7,389.0 111.2,394.2 112.8,387.9 114.3,392.9 115.9,388.0 117.4,395.0 119.0,390.1 120.5,393.4 122.1,390.1 123.6,393.2 125.2,389.1 125.3,374.8 125.89999999999999,400.5 126.7,395.8 128.3,388.5 129.8,391.3 131.4,385.6 132.9,395.1 134.5,388.2 136.0,392.5 137.6,389.6 139.1,391.5 140.7,390.1 142.2,392.0 143.8,389.6 145.3,394.8 146.9,391.4 148.4,394.7 150.0,393.0 151.6,397.2 153.1,391.3 154.7,393.8 156.2,391.3 157.8,393.4 159.3,388.6 160.9,392.9 162.4,391.4 164.0,395.6 165.5,387.5 167.1,393.9 168.6,389.4 170.2,395.3 171.7,391.3 173.3,396.1 174.8,387.8 176.4,395.5 177.9,390.7 179.5,393.5 181.0,391.6 182.6,395.7 184.1,388.8 185.7,398.4 187.2,389.1 188.8,394.5 190.3,392.3 191.9,396.7 193.4,391.4 195.0,396.4 196.5,390.9 198.1,398.2 199.6,391.4 201.2,396.4 202.7,390.6 204.3,397.8 205.8,390.3 207.4,394.8 208.9,392.9 210.5,398.8 212.0,390.9 213.6,398.7 215.1,392.0 216.7,394.8 218.2,389.7 219.8,397.8 221.3,391.3 222.9,395.7 224.4,393.2 226.0,397.0 227.5,393.0 229.1,398.2 230.6,392.9 232.2,398.1 233.7,391.3 235.3,396.7 236.8,393.9 238.4,395.4 239.9,391.2 241.5,395.9 243.0,391.5 244.6,395.6 246.1,390.3 247.7,395.2 249.2,391.4 250.8,394.6 252.3,389.4 253.9,396.3 255.4,389.8 257.0,394.3 258.5,389.2 260.1,394.6 261.6,387.7 263.2,394.6 264.7,387.0 266.3,391.3 267.8,388.5 269.4,391.6 270.9,387.8 272.5,393.7 274.0,387.7 275.6,391.4 277.1,385.6 278.7,394.4 280.2,389.2 281.8,396.3 283.3,389.8 284.9,393.4 286.4,390.3 288.0,392.3 289.5,389.8 291.1,393.1 292.6,389.4 294.2,395.0 295.7,387.9 296.2,376 297.3,392.8 298.8,388.7 300.4,392.6 301.9,388.4 303.5,393.1 305.0,388.6 306.6,394.5 308.1,391.1 309.7,393.5 311.2,388.2 312.8,394.5 314.3,388.3 315.9,394.7 317.4,390.2 319.0,395.4 320.5,391.3 322.1,393.7 323.6,391.7 325.2,394.0 326.7,391.2 328.3,393.8 329.8,391.1 331.4,392.5 332.9,391.2 334.5,393.7 336.0,389.5 337.6,395.2 339.1,389.8 340.7,394.8 342.2,389.7 343.8,395.4 345.3,388.8 346.9,394.0 348.4,389.6 350.0,391.7 351.5,387.7 353.1,391.6 354.6,387.8 356.2,395.9 357.7,390.5 359.3,394.4 360.8,391.4 362.4,397.6 363.9,390.4 365.5,398.9 367.0,393.8 368.6,397.1 370.1,393.3 371.7,397.5 373.2,394.1 374.8,397.1 376.3,391.6 377.9,393.6 379.4,393.9 381.0,399.2 382.5,392.2 384.1,395.7 385.6,389.7 387.2,396.0 388.7,390.5 390.3,398.2 391.8,390.7 393.4,395.9 394.9,390.8 396.5,396.2 398.0,389.1 399.6,394.3 401.1,390.6 402.7,392.5 404.2,387.5 405.8,392.5 407.3,386.6 408.9,390.3 410.4,388.7 412.0,395.4 413.5,393.6 415.1,395.1 416.6,392.0 418.2,394.1 419.7,389.0 421.3,393.5 422.8,388.4 424.4,392.6 425.9,388.7 427.5,390.0 429.0,386.8 430.6,388.6 432.1,386.5 433.7,390.2"/>
<rect x="167.6" y="363.8" width="15" height="47.7" fill="none" stroke="#fff" stroke-width="1.2"/>
<rect x="2" y="422" width="459" height="1" fill="#808080" />
<rect x="2" y="422" width="1" height="15" fill="#808080" />
<rect x="2" y="437" width="459" height="1" fill="#fff" />
<rect x="460" y="422" width="1" height="16" fill="#fff" />
<line x1="455.5" y1="437" x2="459.5" y2="433" stroke="#fff" stroke-width="1.2" />
<line x1="456.8" y1="437" x2="459.8" y2="434" stroke="#808080" stroke-width="1.6" />
<line x1="451.5" y1="437" x2="459.5" y2="429" stroke="#fff" stroke-width="1.2" />
<line x1="452.8" y1="437" x2="459.8" y2="430" stroke="#808080" stroke-width="1.6" />
<line x1="447.5" y1="437" x2="459.5" y2="425" stroke="#fff" stroke-width="1.2" />
<line x1="448.8" y1="437" x2="459.8" y2="426" stroke="#808080" stroke-width="1.6" />
<rect x="465.5" y="0" width="2.5" height="439" fill="#f4f4f4" />
<rect x="466" y="0" width="171" height="1" fill="#d8d8d8" />
<rect x="467" y="1" width="170" height="0.6" fill="#f4f4f4" />
<rect x="468" y="1.5" width="169" height="17" fill="url(#gi)" />
<rect x="470" y="4" width="15" height="12" fill="#dcdcdc" />
<rect x="471.5" y="5.5" width="12" height="9" fill="#000" />
<rect x="472.0" y="5.5" width="1" height="9" fill="#095c09" />
<rect x="474.6" y="5.5" width="1" height="9" fill="#095c09" />
<rect x="477.2" y="5.5" width="1" height="9" fill="#095c09" />
<rect x="479.8" y="5.5" width="1" height="9" fill="#095c09" />
<rect x="482.4" y="5.5" width="1" height="9" fill="#095c09" />
<rect x="471.5" y="6.0" width="12" height="1" fill="#095c09" />
<rect x="471.5" y="8.5" width="12" height="1" fill="#095c09" />
<rect x="471.5" y="11.0" width="12" height="1" fill="#095c09" />
<rect x="471.5" y="13.5" width="12" height="1" fill="#095c09" />
<path d="M472.5,9.2 q1.3,-2.4 2.6,0 t2.6,0 t2.6,0 t2.6,0" fill="none" stroke="#e8ffe8" stroke-width="0.8"/>
<text x="488.8" y="14.6" font-family="'Liberation Sans', Arial, sans-serif" font-size="12.5" font-weight="bold" fill="#d8d8d8" text-anchor="start" textLength="39.5" lengthAdjust="spacingAndGlyphs" >Control</text>
<rect x="619" y="3" width="17" height="14" fill="#c0c0c0" />
<rect x="619" y="3" width="16" height="1" fill="#fff" />
<rect x="619" y="3" width="1" height="13" fill="#fff" />
<rect x="619" y="16" width="17" height="1" fill="#000" />
<rect x="635" y="3" width="1" height="14" fill="#000" />
<rect x="620" y="15" width="15" height="1" fill="#808080" />
<rect x="634" y="4" width="1" height="12" fill="#808080" />
<path d="M623.5,6 l7,7 M630.5,6 l-7,7" stroke="#000" stroke-width="1.7" fill="none"/>
<text x="475.2" y="33.7" font-family="'Liberation Sans', Arial, sans-serif" font-size="12" font-weight="normal" fill="#e4e4e4" text-anchor="start" textLength="17" lengthAdjust="spacingAndGlyphs" >File</text>
<text x="474.4" y="32.9" font-family="'Liberation Sans', Arial, sans-serif" font-size="12" font-weight="normal" fill="#808080" text-anchor="start" textLength="17" lengthAdjust="spacingAndGlyphs" >File</text>
<text x="503.1" y="33.7" font-family="'Liberation Sans', Arial, sans-serif" font-size="12" font-weight="normal" fill="#e4e4e4" text-anchor="start" textLength="23" lengthAdjust="spacingAndGlyphs" >Help</text>
<text x="502.3" y="32.9" font-family="'Liberation Sans', Arial, sans-serif" font-size="12" font-weight="normal" fill="#808080" text-anchor="start" textLength="23" lengthAdjust="spacingAndGlyphs" >Help</text>
<line x1="474.4" y1="34.5" x2="480" y2="34.5" stroke="#808080" stroke-width="1" />
<line x1="502.3" y1="34.5" x2="510" y2="34.5" stroke="#808080" stroke-width="1" />
<rect x="468" y="46" width="7" height="1" fill="#808080" />
<rect x="469" y="47" width="6" height="1" fill="#fff" />
<rect x="527" y="46" width="21" height="1" fill="#808080" />
<rect x="528" y="47" width="20" height="1" fill="#fff" />
<rect x="468" y="46" width="1" height="216" fill="#808080" />
<rect x="469" y="47" width="1" height="214" fill="#fff" />
<rect x="468" y="261" width="80" height="1" fill="#808080" />
<rect x="468" y="262" width="81" height="1" fill="#fff" />
<rect x="547" y="46" width="1" height="216" fill="#808080" />
<rect x="548" y="46" width="1" height="217" fill="#fff" />
<text x="477" y="49.6" font-family="'Liberation Sans', Arial, sans-serif" font-size="12" font-weight="normal" fill="#000" text-anchor="start" textLength="48" lengthAdjust="spacingAndGlyphs"  stroke="#000" stroke-width="0.22">Horizontal</text>
<text x="492.7" y="65.4" font-family="'Liberation Sans', Arial, sans-serif" font-size="12" font-weight="normal" fill="#000" text-anchor="start" textLength="30.5" lengthAdjust="spacingAndGlyphs"  stroke="#000" stroke-width="0.22">MODE</text>
<rect x="476" y="71" width="64" height="20" fill="#fff" />
<rect x="476" y="71" width="63" height="1" fill="#808080" />
<rect x="476" y="71" width="1" height="19" fill="#808080" />
<rect x="477" y="72" width="61" height="1" fill="#000" />
<rect x="477" y="72" width="1" height="17" fill="#000" />
<rect x="476" y="90" width="64" height="1" fill="#fff" />
<rect x="539" y="71" width="1" height="20" fill="#fff" />
<rect x="477" y="89" width="62" height="1" fill="#e6e6e6" />
<rect x="538" y="72" width="1" height="18" fill="#e6e6e6" />
<rect x="523" y="73" width="15" height="16" fill="#c0c0c0" />
<rect x="523" y="73" width="14" height="1" fill="#fff" />
<rect x="523" y="73" width="1" height="15" fill="#fff" />
<rect x="523" y="88" width="15" height="1" fill="#000" />
<rect x="537" y="73" width="1" height="16" fill="#000" />
<rect x="524" y="87" width="13" height="1" fill="#808080" />
<rect x="536" y="74" width="1" height="14" fill="#808080" />
<path d="M527.0,79.5 h7 l-3.5,3.8 Z" fill="#000"/>
<text x="480.5" y="85.4" font-family="'Liberation Sans', Arial, sans-serif" font-size="12" font-weight="normal" fill="#000" text-anchor="start" textLength="28.5" lengthAdjust="spacingAndGlyphs"  stroke="#000" stroke-width="0.22">AUTO</text>
<text x="484.5" y="107.4" font-family="'Liberation Sans', Arial, sans-serif" font-size="13" font-weight="normal" fill="#000" text-anchor="start" textLength="41.5" lengthAdjust="spacingAndGlyphs"  stroke="#000" stroke-width="0.22">Source</text>
<rect x="476" y="112" width="64" height="19" fill="#fff" />
<rect x="476" y="112" width="63" height="1" fill="#808080" />
<rect x="476" y="112" width="1" height="18" fill="#808080" />
<rect x="477" y="113" width="61" height="1" fill="#000" />
<rect x="477" y="113" width="1" height="16" fill="#000" />
<rect x="476" y="130" width="64" height="1" fill="#fff" />
<rect x="539" y="112" width="1" height="19" fill="#fff" />
<rect x="477" y="129" width="62" height="1" fill="#e6e6e6" />
<rect x="538" y="113" width="1" height="17" fill="#e6e6e6" />
<rect x="523" y="114" width="15" height="15" fill="#c0c0c0" />
<rect x="523" y="114" width="14" height="1" fill="#fff" />
<rect x="523" y="114" width="1" height="14" fill="#fff" />
<rect x="523" y="128" width="15" height="1" fill="#000" />
<rect x="537" y="114" width="1" height="15" fill="#000" />
<rect x="524" y="127" width="13" height="1" fill="#808080" />
<rect x="536" y="115" width="1" height="13" fill="#808080" />
<path d="M527.0,120.0 h7 l-3.5,3.8 Z" fill="#000"/>
<text x="480.5" y="125.4" font-family="'Liberation Sans', Arial, sans-serif" font-size="12" font-weight="normal" fill="#000" text-anchor="start" textLength="21" lengthAdjust="spacingAndGlyphs"  stroke="#000" stroke-width="0.22">CH1</text>
<text x="492.7" y="144.9" font-family="'Liberation Sans', Arial, sans-serif" font-size="12" font-weight="normal" fill="#000" text-anchor="start" textLength="26.8" lengthAdjust="spacingAndGlyphs"  stroke="#000" stroke-width="0.22">Slope</text>
<rect x="476" y="152" width="64" height="19" fill="#fff" />
<rect x="476" y="152" width="63" height="1" fill="#808080" />
<rect x="476" y="152" width="1" height="18" fill="#808080" />
<rect x="477" y="153" width="61" height="1" fill="#000" />
<rect x="477" y="153" width="1" height="16" fill="#000" />
<rect x="476" y="170" width="64" height="1" fill="#fff" />
<rect x="539" y="152" width="1" height="19" fill="#fff" />
<rect x="477" y="169" width="62" height="1" fill="#e6e6e6" />
<rect x="538" y="153" width="1" height="17" fill="#e6e6e6" />
<rect x="523" y="154" width="15" height="15" fill="#c0c0c0" />
<rect x="523" y="154" width="14" height="1" fill="#fff" />
<rect x="523" y="154" width="1" height="14" fill="#fff" />
<rect x="523" y="168" width="15" height="1" fill="#000" />
<rect x="537" y="154" width="1" height="15" fill="#000" />
<rect x="524" y="167" width="13" height="1" fill="#808080" />
<rect x="536" y="155" width="1" height="13" fill="#808080" />
<path d="M527.0,160.0 h7 l-3.5,3.8 Z" fill="#000"/>
<text x="480.5" y="165.4" font-family="'Liberation Sans', Arial, sans-serif" font-size="12" font-weight="normal" fill="#000" text-anchor="start" textLength="38" lengthAdjust="spacingAndGlyphs"  stroke="#000" stroke-width="0.22">Positive</text>
<text x="492.3" y="186" font-family="'Liberation Sans', Arial, sans-serif" font-size="12" font-weight="normal" fill="#000" text-anchor="start" textLength="33" lengthAdjust="spacingAndGlyphs"  stroke="#000" stroke-width="0.22">Couple</text>
<rect x="476" y="192" width="64" height="19" fill="#fff" />
<rect x="476" y="192" width="63" height="1" fill="#808080" />
<rect x="476" y="192" width="1" height="18" fill="#808080" />
<rect x="477" y="193" width="61" height="1" fill="#000" />
<rect x="477" y="193" width="1" height="16" fill="#000" />
<rect x="476" y="210" width="64" height="1" fill="#fff" />
<rect x="539" y="192" width="1" height="19" fill="#fff" />
<rect x="477" y="209" width="62" height="1" fill="#e6e6e6" />
<rect x="538" y="193" width="1" height="17" fill="#e6e6e6" />
<rect x="523" y="194" width="15" height="15" fill="#c0c0c0" />
<rect x="523" y="194" width="14" height="1" fill="#fff" />
<rect x="523" y="194" width="1" height="14" fill="#fff" />
<rect x="523" y="208" width="15" height="1" fill="#000" />
<rect x="537" y="194" width="1" height="15" fill="#000" />
<rect x="524" y="207" width="13" height="1" fill="#808080" />
<rect x="536" y="195" width="1" height="13" fill="#808080" />
<path d="M527.0,200.0 h7 l-3.5,3.8 Z" fill="#000"/>
<text x="480.5" y="205.4" font-family="'Liberation Sans', Arial, sans-serif" font-size="12" font-weight="normal" fill="#000" text-anchor="start" textLength="14" lengthAdjust="spacingAndGlyphs"  stroke="#000" stroke-width="0.22">AC</text>
<rect x="476" y="215" width="65" height="17" fill="#c0c0c0" />
<rect x="476" y="215" width="64" height="1" fill="#fff" />
<rect x="476" y="215" width="1" height="16" fill="#fff" />
<rect x="476" y="231" width="65" height="1" fill="#000" />
<rect x="540" y="215" width="1" height="17" fill="#000" />
<rect x="477" y="230" width="63" height="1" fill="#808080" />
<rect x="539" y="216" width="1" height="15" fill="#808080" />
<text x="494.7" y="227" font-family="'Liberation Sans', Arial, sans-serif" font-size="12" font-weight="normal" fill="#000" text-anchor="start" textLength="28.7" lengthAdjust="spacingAndGlyphs"  stroke="#000" stroke-width="0.22">STOP</text>
<rect x="476" y="239" width="65" height="17" fill="#c0c0c0" />
<rect x="476" y="239" width="64" height="1" fill="#fff" />
<rect x="476" y="239" width="1" height="16" fill="#fff" />
<rect x="476" y="255" width="65" height="1" fill="#000" />
<rect x="540" y="239" width="1" height="17" fill="#000" />
<rect x="477" y="254" width="63" height="1" fill="#808080" />
<rect x="539" y="240" width="1" height="15" fill="#808080" />
<text x="481" y="250.9" font-family="'Liberation Sans', Arial, sans-serif" font-size="12" font-weight="normal" fill="#000" text-anchor="start" textLength="53" lengthAdjust="spacingAndGlyphs"  stroke="#000" stroke-width="0.22">AUTO SET</text>
<rect x="557" y="46" width="7" height="1" fill="#808080" />
<rect x="558" y="47" width="6" height="1" fill="#fff" />
<rect x="603" y="46" width="33" height="1" fill="#808080" />
<rect x="604" y="47" width="32" height="1" fill="#fff" />
<rect x="557" y="46" width="1" height="104" fill="#808080" />
<rect x="558" y="47" width="1" height="102" fill="#fff" />
<rect x="557" y="149" width="79" height="1" fill="#808080" />
<rect x="557" y="150" width="80" height="1" fill="#fff" />
<rect x="635" y="46" width="1" height="104" fill="#808080" />
<rect x="636" y="46" width="1" height="105" fill="#fff" />
<text x="566.3" y="49.4" font-family="'Liberation Sans', Arial, sans-serif" font-size="12" font-weight="normal" fill="#000" text-anchor="start" textLength="34.5" lengthAdjust="spacingAndGlyphs"  stroke="#000" stroke-width="0.22">TIME B</text>
<rect x="564" y="56" width="64" height="18" fill="#c0c0c0" />
<rect x="564" y="56" width="63" height="1" fill="#808080" />
<rect x="564" y="56" width="1" height="17" fill="#808080" />
<rect x="565" y="57" width="61" height="1" fill="#000" />
<rect x="565" y="57" width="1" height="15" fill="#000" />
<rect x="564" y="73" width="64" height="1" fill="#fff" />
<rect x="627" y="56" width="1" height="18" fill="#fff" />
<rect x="565" y="72" width="62" height="1" fill="#e6e6e6" />
<rect x="626" y="57" width="1" height="16" fill="#e6e6e6" />
<rect x="611" y="58" width="15" height="14" fill="#c0c0c0" />
<rect x="611" y="58" width="14" height="1" fill="#fff" />
<rect x="611" y="58" width="1" height="13" fill="#fff" />
<rect x="611" y="71" width="15" height="1" fill="#000" />
<rect x="625" y="58" width="1" height="14" fill="#000" />
<rect x="612" y="70" width="13" height="1" fill="#808080" />
<rect x="624" y="59" width="1" height="12" fill="#808080" />
<path d="M615.0,63.5 h7 l-3.5,3.8 Z" fill="#808080"/>
<path d="M616.0,65.3 h7 l-3.5,3.8 Z" fill="#fff" opacity="0.0"/>
<text x="568.5" y="69.2" font-family="'Liberation Sans', Arial, sans-serif" font-size="12" font-weight="normal" fill="#808080" text-anchor="start" textLength="29" lengthAdjust="spacingAndGlyphs" >0.2uS</text>
<path d="M575.69,131.61 A29,29 0 1 1 616.71,131.61" fill="none" stroke="#000" stroke-width="1"/>
<circle cx="596.2" cy="111.1" r="26" fill="#d6d6d6"/>
<path d="M614.58,92.72 A26,26 0 0 1 577.82,129.48 Z" fill="#808080"/>
<circle cx="596.2" cy="111.1" r="26" fill="none" stroke="#000" stroke-width="1"/>
<circle cx="596.2" cy="111.39999999999999" r="20.5" fill="#0000ff"/>
<line x1="579.23" y1="128.07" x2="570.04" y2="137.26" stroke="#000" stroke-width="1" />
<line x1="613.17" y1="128.07" x2="622.36" y2="137.26" stroke="#000" stroke-width="1" />
<line x1="605.9" y1="111.4" x2="616" y2="113.3" stroke="#fff" stroke-width="2.4" stroke-linecap="butt"/>
<rect x="557" y="157" width="7" height="1" fill="#808080" />
<rect x="558" y="158" width="6" height="1" fill="#fff" />
<rect x="603" y="157" width="33" height="1" fill="#808080" />
<rect x="604" y="158" width="32" height="1" fill="#fff" />
<rect x="557" y="157" width="1" height="105" fill="#808080" />
<rect x="558" y="158" width="1" height="103" fill="#fff" />
<rect x="557" y="261" width="79" height="1" fill="#808080" />
<rect x="557" y="262" width="80" height="1" fill="#fff" />
<rect x="635" y="157" width="1" height="105" fill="#808080" />
<rect x="636" y="157" width="1" height="106" fill="#fff" />
<text x="566.3" y="161.3" font-family="'Liberation Sans', Arial, sans-serif" font-size="12" font-weight="normal" fill="#000" text-anchor="start" textLength="34.5" lengthAdjust="spacingAndGlyphs"  stroke="#000" stroke-width="0.22">TIME A</text>
<rect x="564" y="168" width="64" height="18" fill="#c0c0c0" />
<rect x="564" y="168" width="63" height="1" fill="#808080" />
<rect x="564" y="168" width="1" height="17" fill="#808080" />
<rect x="565" y="169" width="61" height="1" fill="#000" />
<rect x="565" y="169" width="1" height="15" fill="#000" />
<rect x="564" y="185" width="64" height="1" fill="#fff" />
<rect x="627" y="168" width="1" height="18" fill="#fff" />
<rect x="565" y="184" width="62" height="1" fill="#e6e6e6" />
<rect x="626" y="169" width="1" height="16" fill="#e6e6e6" />
<rect x="611" y="170" width="15" height="14" fill="#c0c0c0" />
<rect x="611" y="170" width="14" height="1" fill="#fff" />
<rect x="611" y="170" width="1" height="13" fill="#fff" />
<rect x="611" y="183" width="15" height="1" fill="#000" />
<rect x="625" y="170" width="1" height="14" fill="#000" />
<rect x="612" y="182" width="13" height="1" fill="#808080" />
<rect x="624" y="171" width="1" height="12" fill="#808080" />
<path d="M615.0,175.5 h7 l-3.5,3.8 Z" fill="#808080"/>
<path d="M616.0,177.3 h7 l-3.5,3.8 Z" fill="#fff" opacity="0.0"/>
<text x="568.5" y="181.20000000000002" font-family="'Liberation Sans', Arial, sans-serif" font-size="12" font-weight="normal" fill="#808080" text-anchor="start" textLength="18.5" lengthAdjust="spacingAndGlyphs" >5uS</text>
<path d="M575.69,243.61 A29,29 0 1 1 616.71,243.61" fill="none" stroke="#000" stroke-width="1"/>
<circle cx="596.2" cy="223.1" r="26" fill="#d6d6d6"/>
<path d="M614.58,204.72 A26,26 0 0 1 577.82,241.48 Z" fill="#808080"/>
<circle cx="596.2" cy="223.1" r="26" fill="none" stroke="#000" stroke-width="1"/>
<circle cx="596.2" cy="223.4" r="20.5" fill="#0000ff"/>
<line x1="579.23" y1="240.07" x2="570.04" y2="249.26" stroke="#000" stroke-width="1" />
<line x1="613.17" y1="240.07" x2="622.36" y2="249.26" stroke="#000" stroke-width="1" />
<line x1="605.2" y1="218.6" x2="615" y2="214.9" stroke="#fff" stroke-width="2.4" stroke-linecap="butt"/>
<rect x="468" y="270" width="7" height="1" fill="#808080" />
<rect x="469" y="271" width="6" height="1" fill="#fff" />
<rect x="515" y="270" width="121" height="1" fill="#808080" />
<rect x="516" y="271" width="120" height="1" fill="#fff" />
<rect x="468" y="270" width="1" height="170" fill="#808080" />
<rect x="469" y="271" width="1" height="168" fill="#fff" />
<rect x="468" y="439" width="168" height="1" fill="#808080" />
<rect x="468" y="440" width="169" height="1" fill="#fff" />
<rect x="635" y="270" width="1" height="25" fill="#808080" />
<rect x="636" y="270" width="1" height="25" fill="#fff" />
<text x="477.4" y="273.5" font-family="'Liberation Sans', Arial, sans-serif" font-size="12" font-weight="normal" fill="#000" text-anchor="start" textLength="35" lengthAdjust="spacingAndGlyphs"  stroke="#000" stroke-width="0.22">Vertical</text>
<rect x="469" y="295" width="8" height="1" fill="#fff" />
<rect x="469" y="294" width="8" height="1" fill="#808080" />
<rect x="629" y="295" width="8" height="1" fill="#fff" />
<rect x="629" y="294" width="8" height="1" fill="#808080" />
<rect x="547" y="328" width="1" height="112" fill="#808080" />
<rect x="548" y="328" width="1" height="112" fill="#fff" />
<rect x="556" y="328" width="1" height="112" fill="#808080" />
<rect x="557" y="328" width="1" height="112" fill="#fff" />
<rect x="477" y="281" width="13" height="13" fill="#fff" />
<rect x="477" y="281" width="12" height="1" fill="#808080" />
<rect x="477" y="281" width="1" height="12" fill="#808080" />
<rect x="478" y="282" width="10" height="1" fill="#000" />
<rect x="478" y="282" width="1" height="10" fill="#000" />
<rect x="477" y="293" width="13" height="1" fill="#fff" />
<rect x="489" y="281" width="1" height="13" fill="#fff" />
<rect x="478" y="292" width="11" height="1" fill="#e6e6e6" />
<rect x="488" y="282" width="1" height="11" fill="#e6e6e6" />
<path d="M480,287 l2.5,2.5 l4.5,-4.5" fill="none" stroke="#000" stroke-width="1.9"/>
<text x="494.4" y="290.7" font-family="'Liberation Sans', Arial, sans-serif" font-size="12" font-weight="normal" fill="#000" text-anchor="start" textLength="25" lengthAdjust="spacingAndGlyphs"  stroke="#000" stroke-width="0.22">CH.A</text>
<circle cx="499" cy="301" r="5.5" fill="#fff"/>
<path d="M494.8,305.2 A6,6 0 0 1 503.2,296.8" fill="none" stroke="#808080" stroke-width="1"/>
<path d="M495.4,304.6 A5,5 0 0 1 502.6,297.4" fill="none" stroke="#000" stroke-width="1"/>
<path d="M494.8,305.2 A6,6 0 0 0 503.2,296.8" fill="none" stroke="#fff" stroke-width="1"/>
<text x="510.2" y="305.5" font-family="'Liberation Sans', Arial, sans-serif" font-size="12" font-weight="normal" fill="#000" text-anchor="start" textLength="15" lengthAdjust="spacingAndGlyphs"  stroke="#000" stroke-width="0.22">DC</text>
<circle cx="499" cy="317" r="5.5" fill="#fff"/>
<path d="M494.8,321.2 A6,6 0 0 1 503.2,312.8" fill="none" stroke="#808080" stroke-width="1"/>
<path d="M495.4,320.6 A5,5 0 0 1 502.6,313.4" fill="none" stroke="#000" stroke-width="1"/>
<path d="M494.8,321.2 A6,6 0 0 0 503.2,312.8" fill="none" stroke="#fff" stroke-width="1"/>
<circle cx="499" cy="317" r="2" fill="#000"/>
<text x="510.2" y="321.5" font-family="'Liberation Sans', Arial, sans-serif" font-size="12" font-weight="normal" fill="#000" text-anchor="start" textLength="14.5" lengthAdjust="spacingAndGlyphs"  stroke="#000" stroke-width="0.22">AC</text>
<circle cx="499" cy="332.7" r="5.5" fill="#fff"/>
<path d="M494.8,336.9 A6,6 0 0 1 503.2,328.5" fill="none" stroke="#808080" stroke-width="1"/>
<path d="M495.4,336.3 A5,5 0 0 1 502.6,329.09999999999997" fill="none" stroke="#000" stroke-width="1"/>
<path d="M494.8,336.9 A6,6 0 0 0 503.2,328.5" fill="none" stroke="#fff" stroke-width="1"/>
<text x="510.2" y="337.5" font-family="'Liberation Sans', Arial, sans-serif" font-size="12" font-weight="normal" fill="#000" text-anchor="start" textLength="23" lengthAdjust="spacingAndGlyphs"  stroke="#000" stroke-width="0.22">GND</text>
<rect x="532" y="281" width="13" height="13" fill="#fff" />
<rect x="532" y="281" width="12" height="1" fill="#808080" />
<rect x="532" y="281" width="1" height="12" fill="#808080" />
<rect x="533" y="282" width="10" height="1" fill="#000" />
<rect x="533" y="282" width="1" height="10" fill="#000" />
<rect x="532" y="293" width="13" height="1" fill="#fff" />
<rect x="544" y="281" width="1" height="13" fill="#fff" />
<rect x="533" y="292" width="11" height="1" fill="#e6e6e6" />
<rect x="543" y="282" width="1" height="11" fill="#e6e6e6" />
<text x="550.3" y="290.3" font-family="'Liberation Sans', Arial, sans-serif" font-size="12" font-weight="normal" fill="#000" text-anchor="start" textLength="21.5" lengthAdjust="spacingAndGlyphs"  stroke="#000" stroke-width="0.22">ADD</text>
<rect x="532" y="297" width="13" height="13" fill="#fff" />
<rect x="532" y="297" width="12" height="1" fill="#808080" />
<rect x="532" y="297" width="1" height="12" fill="#808080" />
<rect x="533" y="298" width="10" height="1" fill="#000" />
<rect x="533" y="298" width="1" height="10" fill="#000" />
<rect x="532" y="309" width="13" height="1" fill="#fff" />
<rect x="544" y="297" width="1" height="13" fill="#fff" />
<rect x="533" y="308" width="11" height="1" fill="#e6e6e6" />
<rect x="543" y="298" width="1" height="11" fill="#e6e6e6" />
<text x="550.3" y="306" font-family="'Liberation Sans', Arial, sans-serif" font-size="12" font-weight="normal" fill="#000" text-anchor="start" textLength="20.5" lengthAdjust="spacingAndGlyphs"  stroke="#000" stroke-width="0.22">SUB</text>
<rect x="532" y="313" width="13" height="13" fill="#fff" />
<rect x="532" y="313" width="12" height="1" fill="#808080" />
<rect x="532" y="313" width="1" height="12" fill="#808080" />
<rect x="533" y="314" width="10" height="1" fill="#000" />
<rect x="533" y="314" width="1" height="10" fill="#000" />
<rect x="532" y="325" width="13" height="1" fill="#fff" />
<rect x="544" y="313" width="1" height="13" fill="#fff" />
<rect x="533" y="324" width="11" height="1" fill="#e6e6e6" />
<rect x="543" y="314" width="1" height="11" fill="#e6e6e6" />
<text x="549.7" y="322.5" font-family="'Liberation Sans', Arial, sans-serif" font-size="12" font-weight="normal" fill="#000" text-anchor="start" textLength="17" lengthAdjust="spacingAndGlyphs"  stroke="#000" stroke-width="0.22">X-Y</text>
<rect x="581" y="281" width="13" height="13" fill="#fff" />
<rect x="581" y="281" width="12" height="1" fill="#808080" />
<rect x="581" y="281" width="1" height="12" fill="#808080" />
<rect x="582" y="282" width="10" height="1" fill="#000" />
<rect x="582" y="282" width="1" height="10" fill="#000" />
<rect x="581" y="293" width="13" height="1" fill="#fff" />
<rect x="593" y="281" width="1" height="13" fill="#fff" />
<rect x="582" y="292" width="11" height="1" fill="#e6e6e6" />
<rect x="592" y="282" width="1" height="11" fill="#e6e6e6" />
<text x="598.5" y="290.3" font-family="'Liberation Sans', Arial, sans-serif" font-size="12" font-weight="normal" fill="#000" text-anchor="start" textLength="23.5" lengthAdjust="spacingAndGlyphs"  stroke="#000" stroke-width="0.22">CH.B</text>
<circle cx="587" cy="302.6" r="5.5" fill="#fff"/>
<path d="M582.8,306.8 A6,6 0 0 1 591.2,298.40000000000003" fill="none" stroke="#808080" stroke-width="1"/>
<path d="M583.4,306.20000000000005 A5,5 0 0 1 590.6,299.0" fill="none" stroke="#000" stroke-width="1"/>
<path d="M582.8,306.8 A6,6 0 0 0 591.2,298.40000000000003" fill="none" stroke="#fff" stroke-width="1"/>
<text x="598.5" y="306" font-family="'Liberation Sans', Arial, sans-serif" font-size="12" font-weight="normal" fill="#000" text-anchor="start" textLength="15" lengthAdjust="spacingAndGlyphs"  stroke="#000" stroke-width="0.22">DC</text>
<circle cx="587" cy="319" r="5.5" fill="#fff"/>
<path d="M582.8,323.2 A6,6 0 0 1 591.2,314.8" fill="none" stroke="#808080" stroke-width="1"/>
<path d="M583.4,322.6 A5,5 0 0 1 590.6,315.4" fill="none" stroke="#000" stroke-width="1"/>
<path d="M582.8,323.2 A6,6 0 0 0 591.2,314.8" fill="none" stroke="#fff" stroke-width="1"/>
<circle cx="587" cy="319" r="2" fill="#000"/>
<text x="598.5" y="322" font-family="'Liberation Sans', Arial, sans-serif" font-size="12" font-weight="normal" fill="#000" text-anchor="start" textLength="14.5" lengthAdjust="spacingAndGlyphs"  stroke="#000" stroke-width="0.22">AC</text>
<circle cx="587" cy="334.8" r="5.5" fill="#fff"/>
<path d="M582.8,339.0 A6,6 0 0 1 591.2,330.6" fill="none" stroke="#808080" stroke-width="1"/>
<path d="M583.4,338.40000000000003 A5,5 0 0 1 590.6,331.2" fill="none" stroke="#000" stroke-width="1"/>
<path d="M582.8,339.0 A6,6 0 0 0 591.2,330.6" fill="none" stroke="#fff" stroke-width="1"/>
<text x="598.5" y="338.3" font-family="'Liberation Sans', Arial, sans-serif" font-size="12" font-weight="normal" fill="#000" text-anchor="start" textLength="23" lengthAdjust="spacingAndGlyphs"  stroke="#000" stroke-width="0.22">GND</text>
<rect x="476" y="344" width="64" height="19" fill="#c0c0c0" />
<rect x="476" y="344" width="63" height="1" fill="#808080" />
<rect x="476" y="344" width="1" height="18" fill="#808080" />
<rect x="477" y="345" width="61" height="1" fill="#000" />
<rect x="477" y="345" width="1" height="16" fill="#000" />
<rect x="476" y="362" width="64" height="1" fill="#fff" />
<rect x="539" y="344" width="1" height="19" fill="#fff" />
<rect x="477" y="361" width="62" height="1" fill="#e6e6e6" />
<rect x="538" y="345" width="1" height="17" fill="#e6e6e6" />
<rect x="523" y="346" width="15" height="15" fill="#c0c0c0" />
<rect x="523" y="346" width="14" height="1" fill="#fff" />
<rect x="523" y="346" width="1" height="14" fill="#fff" />
<rect x="523" y="360" width="15" height="1" fill="#000" />
<rect x="537" y="346" width="1" height="15" fill="#000" />
<rect x="524" y="359" width="13" height="1" fill="#808080" />
<rect x="536" y="347" width="1" height="13" fill="#808080" />
<path d="M527.0,352.0 h7 l-3.5,3.8 Z" fill="#808080"/>
<path d="M528.0,353.8 h7 l-3.5,3.8 Z" fill="#fff" opacity="0.0"/>
<text x="480.5" y="357.4" font-family="'Liberation Sans', Arial, sans-serif" font-size="12" font-weight="normal" fill="#808080" text-anchor="start" textLength="27.5" lengthAdjust="spacingAndGlyphs" >10mV</text>
<rect x="564" y="344" width="64" height="19" fill="#c0c0c0" />
<rect x="564" y="344" width="63" height="1" fill="#808080" />
<rect x="564" y="344" width="1" height="18" fill="#808080" />
<rect x="565" y="345" width="61" height="1" fill="#000" />
<rect x="565" y="345" width="1" height="16" fill="#000" />
<rect x="564" y="362" width="64" height="1" fill="#fff" />
<rect x="627" y="344" width="1" height="19" fill="#fff" />
<rect x="565" y="361" width="62" height="1" fill="#e6e6e6" />
<rect x="626" y="345" width="1" height="17" fill="#e6e6e6" />
<rect x="611" y="346" width="15" height="15" fill="#c0c0c0" />
<rect x="611" y="346" width="14" height="1" fill="#fff" />
<rect x="611" y="346" width="1" height="14" fill="#fff" />
<rect x="611" y="360" width="15" height="1" fill="#000" />
<rect x="625" y="346" width="1" height="15" fill="#000" />
<rect x="612" y="359" width="13" height="1" fill="#808080" />
<rect x="624" y="347" width="1" height="13" fill="#808080" />
<path d="M615.0,352.0 h7 l-3.5,3.8 Z" fill="#808080"/>
<path d="M616.0,353.8 h7 l-3.5,3.8 Z" fill="#fff" opacity="0.0"/>
<text x="568.5" y="357.4" font-family="'Liberation Sans', Arial, sans-serif" font-size="12" font-weight="normal" fill="#808080" text-anchor="start" textLength="12.5" lengthAdjust="spacingAndGlyphs" >5V</text>
<path d="M487.99,419.61 A29,29 0 1 1 529.01,419.61" fill="none" stroke="#000" stroke-width="1"/>
<circle cx="508.5" cy="399.1" r="26" fill="#d6d6d6"/>
<path d="M526.88,380.72 A26,26 0 0 1 490.12,417.48 Z" fill="#808080"/>
<circle cx="508.5" cy="399.1" r="26" fill="none" stroke="#000" stroke-width="1"/>
<circle cx="508.5" cy="399.40000000000003" r="20.5" fill="#0000ff"/>
<line x1="491.53" y1="416.07" x2="482.34" y2="425.26" stroke="#000" stroke-width="1" />
<line x1="525.47" y1="416.07" x2="534.66" y2="425.26" stroke="#000" stroke-width="1" />
<line x1="514.2" y1="407.3" x2="521.8" y2="413.5" stroke="#fff" stroke-width="2.4" stroke-linecap="butt"/>
<path d="M575.79,419.71 A29,29 0 1 1 616.81,419.71" fill="none" stroke="#000" stroke-width="1"/>
<circle cx="596.3" cy="399.2" r="26" fill="#d6d6d6"/>
<path d="M614.68,380.82 A26,26 0 0 1 577.92,417.58 Z" fill="#808080"/>
<circle cx="596.3" cy="399.2" r="26" fill="none" stroke="#000" stroke-width="1"/>
<circle cx="596.3" cy="399.5" r="20.5" fill="#0000ff"/>
<line x1="579.33" y1="416.17" x2="570.14" y2="425.36" stroke="#000" stroke-width="1" />
<line x1="613.27" y1="416.17" x2="622.46" y2="425.36" stroke="#000" stroke-width="1" />
<line x1="589" y1="407.1" x2="580.8" y2="413.8" stroke="#fff" stroke-width="2.4" stroke-linecap="butt"/>
<rect x="469" y="437" width="79" height="1" fill="#808080" />
<rect x="469" y="438" width="80" height="1" fill="#fff" />
<rect x="558" y="437" width="79" height="1" fill="#808080" />
<rect x="558" y="438" width="79" height="1" fill="#fff" />
</svg>
</body></html>
